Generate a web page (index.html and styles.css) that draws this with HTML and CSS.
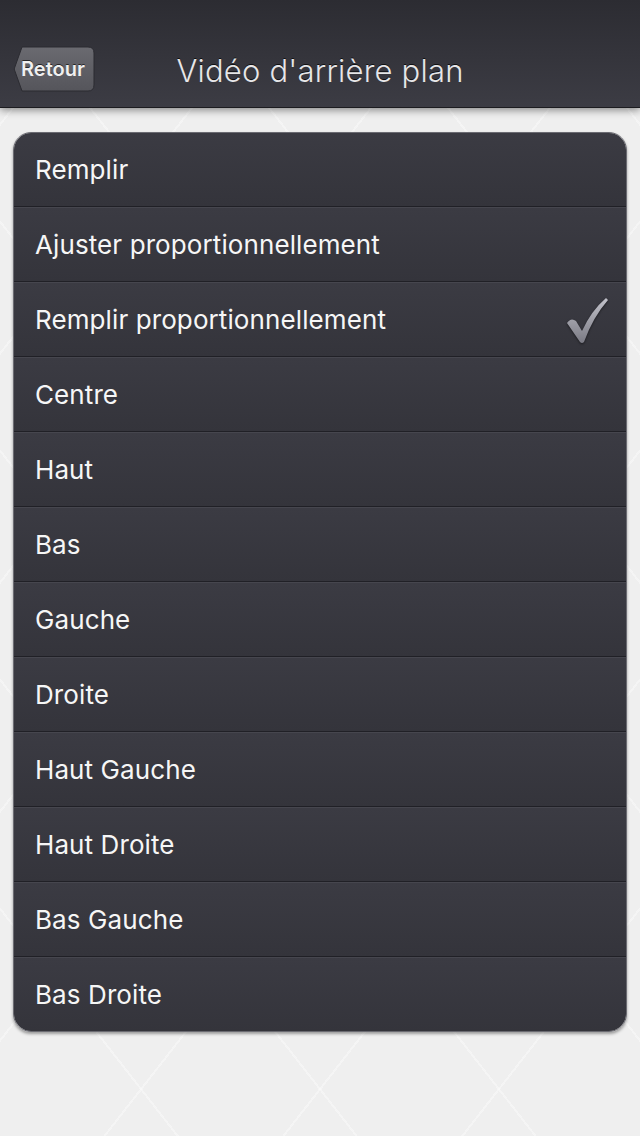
FILE: index.html
```html
<!DOCTYPE html>
<html lang="fr">
  <head>
    <meta charset="UTF-8" />
    <title>Vidéo d'arrière plan</title>
    <link rel="stylesheet" href="styles.css">
  </head>
  <body>
    <header class="navbar">
      <div class="nav-left">
        <div class="back" role="button">
          <svg class="back-shape" width="84" height="48" viewBox="0 0 84 48">
            <defs>
              <linearGradient id="backFill" x1="0" y1="0" x2="0" y2="1">
                <stop offset="0" stop-color="#6a6a70" />
                <stop offset="1" stop-color="#55555b" />
              </linearGradient>
            </defs>
            <path d="M10 2 H76 Q82 2 82 8 V40 Q82 46 76 46 H10 L2.5 25 Q2 24 2.5 23 Z"
              fill="url(#backFill)" stroke="#2b2b31" stroke-width="1" />
          </svg>
          <span class="back-label">Retour</span>
        </div>
      </div>
      <h1 class="title">Vidéo d'arrière plan</h1>
      <div class="nav-right"></div>
    </header>

    <main class="content">
      <ul class="list">
        <li class="row">Remplir</li>
        <li class="row">Ajuster proportionnellement</li>
        <li class="row selected">
          <span>Remplir proportionnellement</span>
          <svg class="check" width="46" height="48" viewBox="0 0 46 48">
            <defs>
              <linearGradient id="checkFill" x1="0" y1="0" x2="0" y2="1">
                <stop offset="0" stop-color="#c2c2ca" />
                <stop offset="1" stop-color="#7a7a84" />
              </linearGradient>
            </defs>
            <path d="M2 27 Q6 21 11 25 L17 35 Q26 15 41 2 L43 4 Q28 21 19 46 Q17 48 15 46 Z"
              fill="url(#checkFill)" />
          </svg>
        </li>
        <li class="row">Centre</li>
        <li class="row">Haut</li>
        <li class="row">Bas</li>
        <li class="row">Gauche</li>
        <li class="row">Droite</li>
        <li class="row">Haut Gauche</li>
        <li class="row">Haut Droite</li>
        <li class="row">Bas Gauche</li>
        <li class="row">Bas Droite</li>
      </ul>
    </main>
  </body>
</html>
```

FILE: styles.css
```css
:root {
  --page-bg: #efefef;
  --nav-top: #2c2c32;
  --nav-bottom: #3c3c44;
  --row-top: #3b3b43;
  --row-bottom: #34343b;
  --line-dark: #202026;
  --line-light: #46464e;
  --text: #f6f6f6;
  --title: #e6e6e8;
  --font: "Inter", "Liberation Sans", sans-serif;
}

html,
body {
  margin: 0;
  padding: 0;
}

body {
  width: 640px;
  min-height: 1136px;
  font-family: var(--font);
  background-color: var(--page-bg);
  background-image:
    repeating-linear-gradient(52deg, transparent 0 139px, rgba(255, 255, 255, 0.35) 139px 141px),
    repeating-linear-gradient(-52deg, transparent 0 139px, rgba(255, 255, 255, 0.35) 139px 141px);
}

.navbar {
  display: grid;
  grid-template-columns: 1fr auto 1fr;
  align-items: center;
  box-sizing: border-box;
  height: 108px;
  padding: 34px 12px 0;
  background: linear-gradient(to bottom, var(--nav-top), var(--nav-bottom));
  border-bottom: 1px solid #1c1c20;
  box-shadow: 0 2px 8px rgba(0, 0, 0, 0.45);
  position: relative;
  z-index: 1;
}

.back {
  display: inline-grid;
  cursor: pointer;
}

.back-shape,
.back-label {
  grid-area: 1 / 1;
}

.back-label {
  align-self: center;
  justify-self: center;
  padding-right: 2px;
  font-weight: 600;
  font-size: 20px;
  color: #f0f0f0;
  text-shadow: 0 -1px 0 rgba(0, 0, 0, 0.6);
}

.title {
  margin: 0;
  font-size: 31px;
  font-weight: 300;
  color: var(--title);
  text-shadow: 0 -1px 0 rgba(0, 0, 0, 0.7);
  letter-spacing: 0.2px;
}

.content {
  padding: 24px 13px 0;
}

.list {
  list-style: none;
  margin: 0;
  padding: 0;
  border: 1px solid #6b6b72;
  border-radius: 18px;
  overflow: hidden;
  box-shadow: 0 2px 3px rgba(0, 0, 0, 0.35);
}

.row {
  display: flex;
  align-items: center;
  justify-content: space-between;
  height: 73px;
  padding: 0 15px 0 21px;
  font-size: 26px;
  letter-spacing: 0.1px;
  line-height: 1;
  color: var(--text);
  background: linear-gradient(to bottom, var(--row-top), var(--row-bottom));
  border-top: 1px solid var(--line-light);
  border-bottom: 1px solid var(--line-dark);
}

.row:first-child {
  border-top: 0;
}

.row:last-child {
  border-bottom: 0;
}

.check {
  filter: drop-shadow(0 1px 1px rgba(0, 0, 0, 0.5));
}
```
